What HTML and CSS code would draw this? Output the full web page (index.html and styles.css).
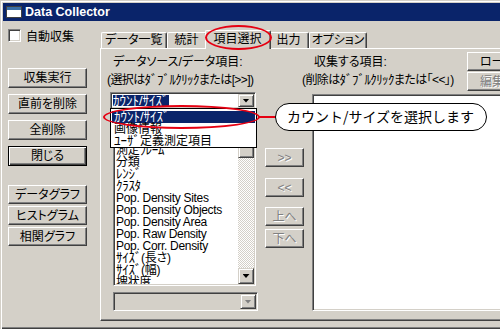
FILE: index.html
```html
<!DOCTYPE html>
<html lang="ja">
<head>
    <meta charset="UTF-8">
    <meta name="viewport" content="width=device-width, initial-scale=1.0">
    <title>Data Collector</title>
    <link rel="stylesheet" href="styles.css">
</head>
<body>
    <div class="window">
        <div class="titlebar">
            <svg class="app-icon" width="16" height="12" viewBox="0 0 16 12">
                <rect x="0.5" y="0.5" width="15" height="11" fill="#fff" stroke="#404040"/>
                <rect x="1" y="1" width="14" height="3" fill="#3a6ea5"/>
            </svg>
            <span class="title">Data Collector</span>
        </div>

        <div class="client">
            <div class="sidebar">
                <label class="check"><span class="check-box"></span>自動収集</label>

                <div class="btn-stack main-btns">
                    <button class="btn">収集実行</button>
                    <button class="btn">直前を削除</button>
                    <button class="btn">全削除</button>
                    <button class="btn default">閉じる</button>
                </div>

                <div class="btn-stack graph-btns">
                    <button class="btn">データグラフ</button>
                    <button class="btn">ヒストグラム</button>
                    <button class="btn">相関グラフ</button>
                </div>
            </div>

            <div class="tab-area">
                <div class="tabstrip">
                    <div class="tab tab-list">データ一覧</div>
                    <div class="tab">統計</div>
                    <div class="tab active">項目選択</div>
                    <div class="tab">出力</div>
                    <div class="tab tab-option">オプション</div>
                </div>

                <div class="panel">
                    <!-- source items -->
                    <div class="src-col">
                        <div class="caption">データソース/データ項目:</div>
                        <div class="hint">(選択は<span class="hw">ﾀﾞﾌﾞﾙｸﾘｯｸ</span>または[&gt;&gt;])</div>
                        <div class="combo">
                            <span class="combo-text"><span class="sel hw">ｶｳﾝﾄ/ｻｲｽﾞ</span></span>
                            <span class="drop-btn"><span class="arrow"></span></span>
                        </div>
                        <div class="listbox">
                            <div class="list-rows">
                                <div class="hw">ｶｳﾝﾄ/ｻｲｽﾞ</div>
                                <div>画像情報</div>
                                <div>測定<span class="hw">ﾌﾚｰﾑ</span></div>
                                <div>分類</div>
                                <div class="hw">ﾚﾝｼﾞ</div>
                                <div class="hw">ｸﾗｽﾀ</div>
                                <div>Pop. Density Sites</div>
                                <div>Pop. Density Objects</div>
                                <div>Pop. Density Area</div>
                                <div>Pop. Raw Density</div>
                                <div>Pop. Corr. Density</div>
                                <div><span class="hw">ｻｲｽﾞ</span>(長さ)</div>
                                <div><span class="hw">ｻｲｽﾞ</span>(幅)</div>
                                <div>塊状度</div>
                            </div>
                            <div class="vscroll">
                                <span class="sb-btn"><span class="arrow up"></span></span>
                                <span class="sb-thumb"></span>
                                <span class="sb-track"></span>
                                <span class="sb-btn"><span class="arrow"></span></span>
                            </div>
                        </div>
                        <div class="combo disabled">
                            <span class="combo-text"></span>
                            <span class="drop-btn"><span class="arrow"></span></span>
                        </div>
                    </div>

                    <!-- move buttons -->
                    <div class="mid-col">
                        <button class="btn small" disabled>&gt;&gt;</button>
                        <button class="btn small" disabled>&lt;&lt;</button>
                        <button class="btn small" disabled>上へ</button>
                        <button class="btn small" disabled>下へ</button>
                    </div>

                    <!-- collected items -->
                    <div class="dst-col">
                        <div class="dst-head">
                            <div class="dst-labels">
                                <div class="caption">収集する項目:</div>
                                <div class="hint">(削除は<span class="hw">ﾀﾞﾌﾞﾙｸﾘｯｸ</span>または「&lt;&lt;」)</div>
                            </div>
                            <div class="side-btns">
                                <button class="btn wide">ロード</button>
                                <button class="btn wide" disabled>編集</button>
                            </div>
                        </div>
                        <div class="dst-list"></div>
                    </div>
                </div>
            </div>
        </div>

        <!-- open dropdown of the combo -->
        <div class="dropdown">
            <div class="item selected hw">ｶｳﾝﾄ/ｻｲｽﾞ</div>
            <div class="item">画像情報</div>
            <div class="item"><span class="hw">ﾕｰｻﾞ</span>定義測定項目</div>
        </div>

        <!-- annotation -->
        <div class="mark mark-tab"></div>
        <div class="mark mark-item"></div>
        <div class="leader"></div>
        <div class="callout">カウント/サイズを選択します</div>
    </div>
</body>
</html>
```

FILE: styles.css
```css
/* Win2000 style dialog */
html, body {
    margin: 0;
    padding: 0;
    overflow: hidden;
    background-color: #d4d0c8;
}
body {
    font-family: "Liberation Sans", "Noto Sans CJK JP", sans-serif;
    font-size: 12px;
    font-feature-settings: "palt";
    color: #000;
}
.hw {
    font-feature-settings: normal;
    font-size: 13px;
}
.window {
    position: relative;
    width: 540px;
    height: 329px;
    box-sizing: border-box;
    padding: 3px 3px 8px 3px;
    background-color: #d4d0c8;
    box-shadow: inset 1px 1px #d4d0c8, inset 2px 2px #fff, inset 0 -1px #404040, inset 0 -2px #808080;
    display: flex;
    flex-direction: column;
}
.titlebar {
    height: 18px;
    flex: none;
    background-color: #0a246a;
    color: #fff;
    display: flex;
    align-items: center;
    gap: 3px;
    padding-left: 3px;
    font: bold 12.5px "Liberation Sans", sans-serif;
}
.app-icon { display: block; }
.client {
    flex: 1;
    display: flex;
}

/* left side */
.sidebar {
    width: 97px;
    flex: none;
    box-sizing: border-box;
    padding-left: 5px;
}
.check {
    display: flex;
    align-items: center;
    gap: 5px;
    margin-top: 8px;
    height: 13px;
}
.check-box {
    width: 13px;
    height: 13px;
    box-sizing: border-box;
    background-color: #fff;
    border: 1px solid;
    border-color: #808080 #fff #fff #808080;
    box-shadow: inset 1px 1px #404040, inset -1px -1px #d4d0c8;
}
.btn-stack {
    display: flex;
    flex-direction: column;
}
.main-btns { margin-top: 26px; gap: 6px; }
.graph-btns { margin-top: 19px; gap: 2px; }
.graph-btns .btn { height: 19px; }

.btn {
    display: block;
    box-sizing: border-box;
    width: 79px;
    height: 20px;
    padding: 0;
    margin: 0;
    background-color: #d4d0c8;
    border: 1px solid;
    border-color: #fff #404040 #404040 #fff;
    box-shadow: inset -1px -1px #808080;
    font: inherit;
    color: #000;
    line-height: 16px;
    text-align: center;
}
.btn.default {
    border-color: #000;
    box-shadow: inset 1px 1px #fff, inset -1px -1px #404040, inset -2px -2px #808080;
}
.btn:disabled {
    color: #808080;
    text-shadow: 1px 1px #fff;
}

/* tabs */
.tab-area {
    flex: 1;
    display: flex;
    flex-direction: column;
    padding-top: 9px;
}
.tabstrip {
    height: 18px;
    flex: none;
    display: flex;
    align-items: flex-end;
    padding-left: 1px;
}
.tab {
    height: 16px;
    box-sizing: border-box;
    padding: 0 7px;
    border-top: 1px solid #fff;
    border-left: 1px solid #fff;
    border-right: 1px solid #404040;
    box-shadow: inset -1px 0 #808080;
    border-radius: 2px 2px 0 0;
    line-height: 15px;
    white-space: nowrap;
}
.tab.tab-list { padding: 0 3px; }
.tab.tab-option { padding: 0 2px; }
.tab.active {
    position: relative;
    z-index: 1;
    height: 19px;
    margin: 0 -2px -1px;
    padding: 0 8px;
    background-color: #d4d0c8;
    line-height: 17px;
}
.panel {
    flex: 1;
    display: flex;
    border-top: 1px solid #fff;
    border-left: 1px solid #fff;
    border-bottom: 1px solid #404040;
    box-shadow: inset 0 -1px #808080;
}
.caption, .hint {
    line-height: 12px;
    height: 12px;
    white-space: nowrap;
}
.hint { letter-spacing: -0.6px; }

/* source column */
.src-col {
    width: 151px;
    flex: none;
    margin-left: 6px;
    display: flex;
    flex-direction: column;
    align-items: flex-start;
}
.src-col .caption { margin: 7px 0 0 6px; }
.src-col .hint { margin-top: 6px; }

.combo {
    display: flex;
    box-sizing: border-box;
    width: 146px;
    height: 17px;
    margin: 6px 0 0 3px;
    padding: 1px;
    background-color: #fff;
    border: 1px solid;
    border-color: #808080 #fff #fff #808080;
    box-shadow: inset 1px 1px #404040, inset -1px -1px #d4d0c8;
}
.combo-text {
    flex: 1;
    padding: 0 0 0 1px;
    line-height: 13px;
}
.combo-text .sel {
    display: inline-block;
    background-color: #0a246a;
    color: #fff;
    line-height: 11px;
    margin-top: 1px;
}
.drop-btn, .sb-btn {
    width: 16px;
    flex: none;
    box-sizing: border-box;
    background-color: #d4d0c8;
    border: 1px solid;
    border-color: #d4d0c8 #404040 #404040 #d4d0c8;
    box-shadow: inset 1px 1px #fff, inset -1px -1px #808080;
    display: flex;
    align-items: center;
    justify-content: center;
}
.sb-btn { height: 16px; }
.arrow {
    width: 7px;
    height: 4px;
    background-color: #000;
    clip-path: polygon(0 0, 100% 0, 50% 100%);
}
.arrow.up { clip-path: polygon(50% 0, 100% 100%, 0 100%); }

.combo.disabled {
    width: 145px;
    height: 19px;
    margin: 6px 0 0 6px;
    background-color: #d4d0c8;
}
.combo.disabled .arrow {
    background-color: #808080;
    filter: drop-shadow(1px 1px 0 #fff);
}

.listbox {
    display: flex;
    box-sizing: border-box;
    width: 143px;
    height: 176px;
    margin: 1px 0 0 6px;
    padding: 1px;
    background-color: #fff;
    border: 1px solid;
    border-color: #808080 #fff #fff #808080;
    box-shadow: inset 1px 1px #404040, inset -1px -1px #d4d0c8;
    overflow: hidden;
}
.list-rows {
    flex: 1;
    padding: 8px 0 0 1px;
    line-height: 12px;
    letter-spacing: -0.3px;
    white-space: nowrap;
    overflow: hidden;
}
.list-rows div { height: 12px; }
.vscroll {
    width: 16px;
    flex: none;
    display: flex;
    flex-direction: column;
}
.sb-thumb {
    height: 30px;
    flex: none;
    box-sizing: border-box;
    background-color: #d4d0c8;
    border: 1px solid;
    border-color: #d4d0c8 #404040 #404040 #d4d0c8;
    box-shadow: inset 1px 1px #fff, inset -1px -1px #808080;
}
.sb-track {
    flex: 1;
    background: repeating-conic-gradient(#fff 0 25%, #d4d0c8 0 50%) 0 0 / 2px 2px;
}

/* middle buttons */
.mid-col {
    width: 39px;
    flex: none;
    margin-left: 7px;
    padding-top: 99px;
    display: flex;
    flex-direction: column;
}
.btn.small { width: 39px; height: 19px; }
.mid-col .btn:nth-child(2) { margin-top: 11px; }
.mid-col .btn:nth-child(3) { margin-top: 10px; }
.mid-col .btn:nth-child(4) { margin-top: 3px; }

/* destination column */
.dst-col {
    flex: 1;
    margin-left: -2px;
    display: flex;
    flex-direction: column;
}
.dst-head { display: flex; }
.dst-labels { width: 165px; flex: none; }
.dst-labels .caption { margin: 7px 0 0 12px; }
.dst-labels .hint { margin-top: 6px; }
.side-btns {
    margin-top: 3px;
    display: flex;
    flex-direction: column;
    gap: 1px;
}
.btn.wide {
    width: 64px;
    height: 19px;
    text-align: left;
    padding-left: 12px;
}
.dst-list {
    height: 217px;
    margin: 3px 0 0 10px;
    box-sizing: border-box;
    background-color: #fff;
    border: 1px solid;
    border-color: #808080 #fff #fff #808080;
    box-shadow: inset 1px 1px #404040, inset -1px -1px #d4d0c8;
}

/* dropdown list (overlay) */
.dropdown {
    position: absolute;
    z-index: 2;
    left: 110px;
    top: 108px;
    width: 147px;
    height: 40px;
    box-sizing: border-box;
    padding: 2px 1px 0 1px;
    background-color: #fff;
    border: 1px solid #000;
    line-height: 12px;
    white-space: nowrap;
}
.dropdown .item { height: 12px; padding-left: 2px; }
.dropdown .item.selected { background-color: #0a246a; color: #fff; }

/* red marks + callout */
.mark {
    position: absolute;
    z-index: 3;
    box-sizing: border-box;
    border: 2px solid #e60012;
    border-radius: 50%;
}
.mark-tab { left: 205px; top: 25px; width: 67px; height: 25px; }
.mark-item { left: 103px; top: 105px; width: 157px; height: 24px; }
.leader {
    position: absolute;
    z-index: 3;
    left: 259px;
    top: 116px;
    width: 17px;
    height: 2px;
    background-color: #e60012;
}
.callout {
    position: absolute;
    z-index: 3;
    left: 275px;
    top: 103px;
    width: 212px;
    height: 28px;
    box-sizing: border-box;
    padding-left: 11px;
    background-color: #fff;
    border: 1.5px solid #000;
    border-radius: 14px;
    font-family: "Noto Sans CJK JP", sans-serif;
    font-size: 14px;
    font-feature-settings: normal;
    line-height: 25px;
    white-space: nowrap;
}
```
